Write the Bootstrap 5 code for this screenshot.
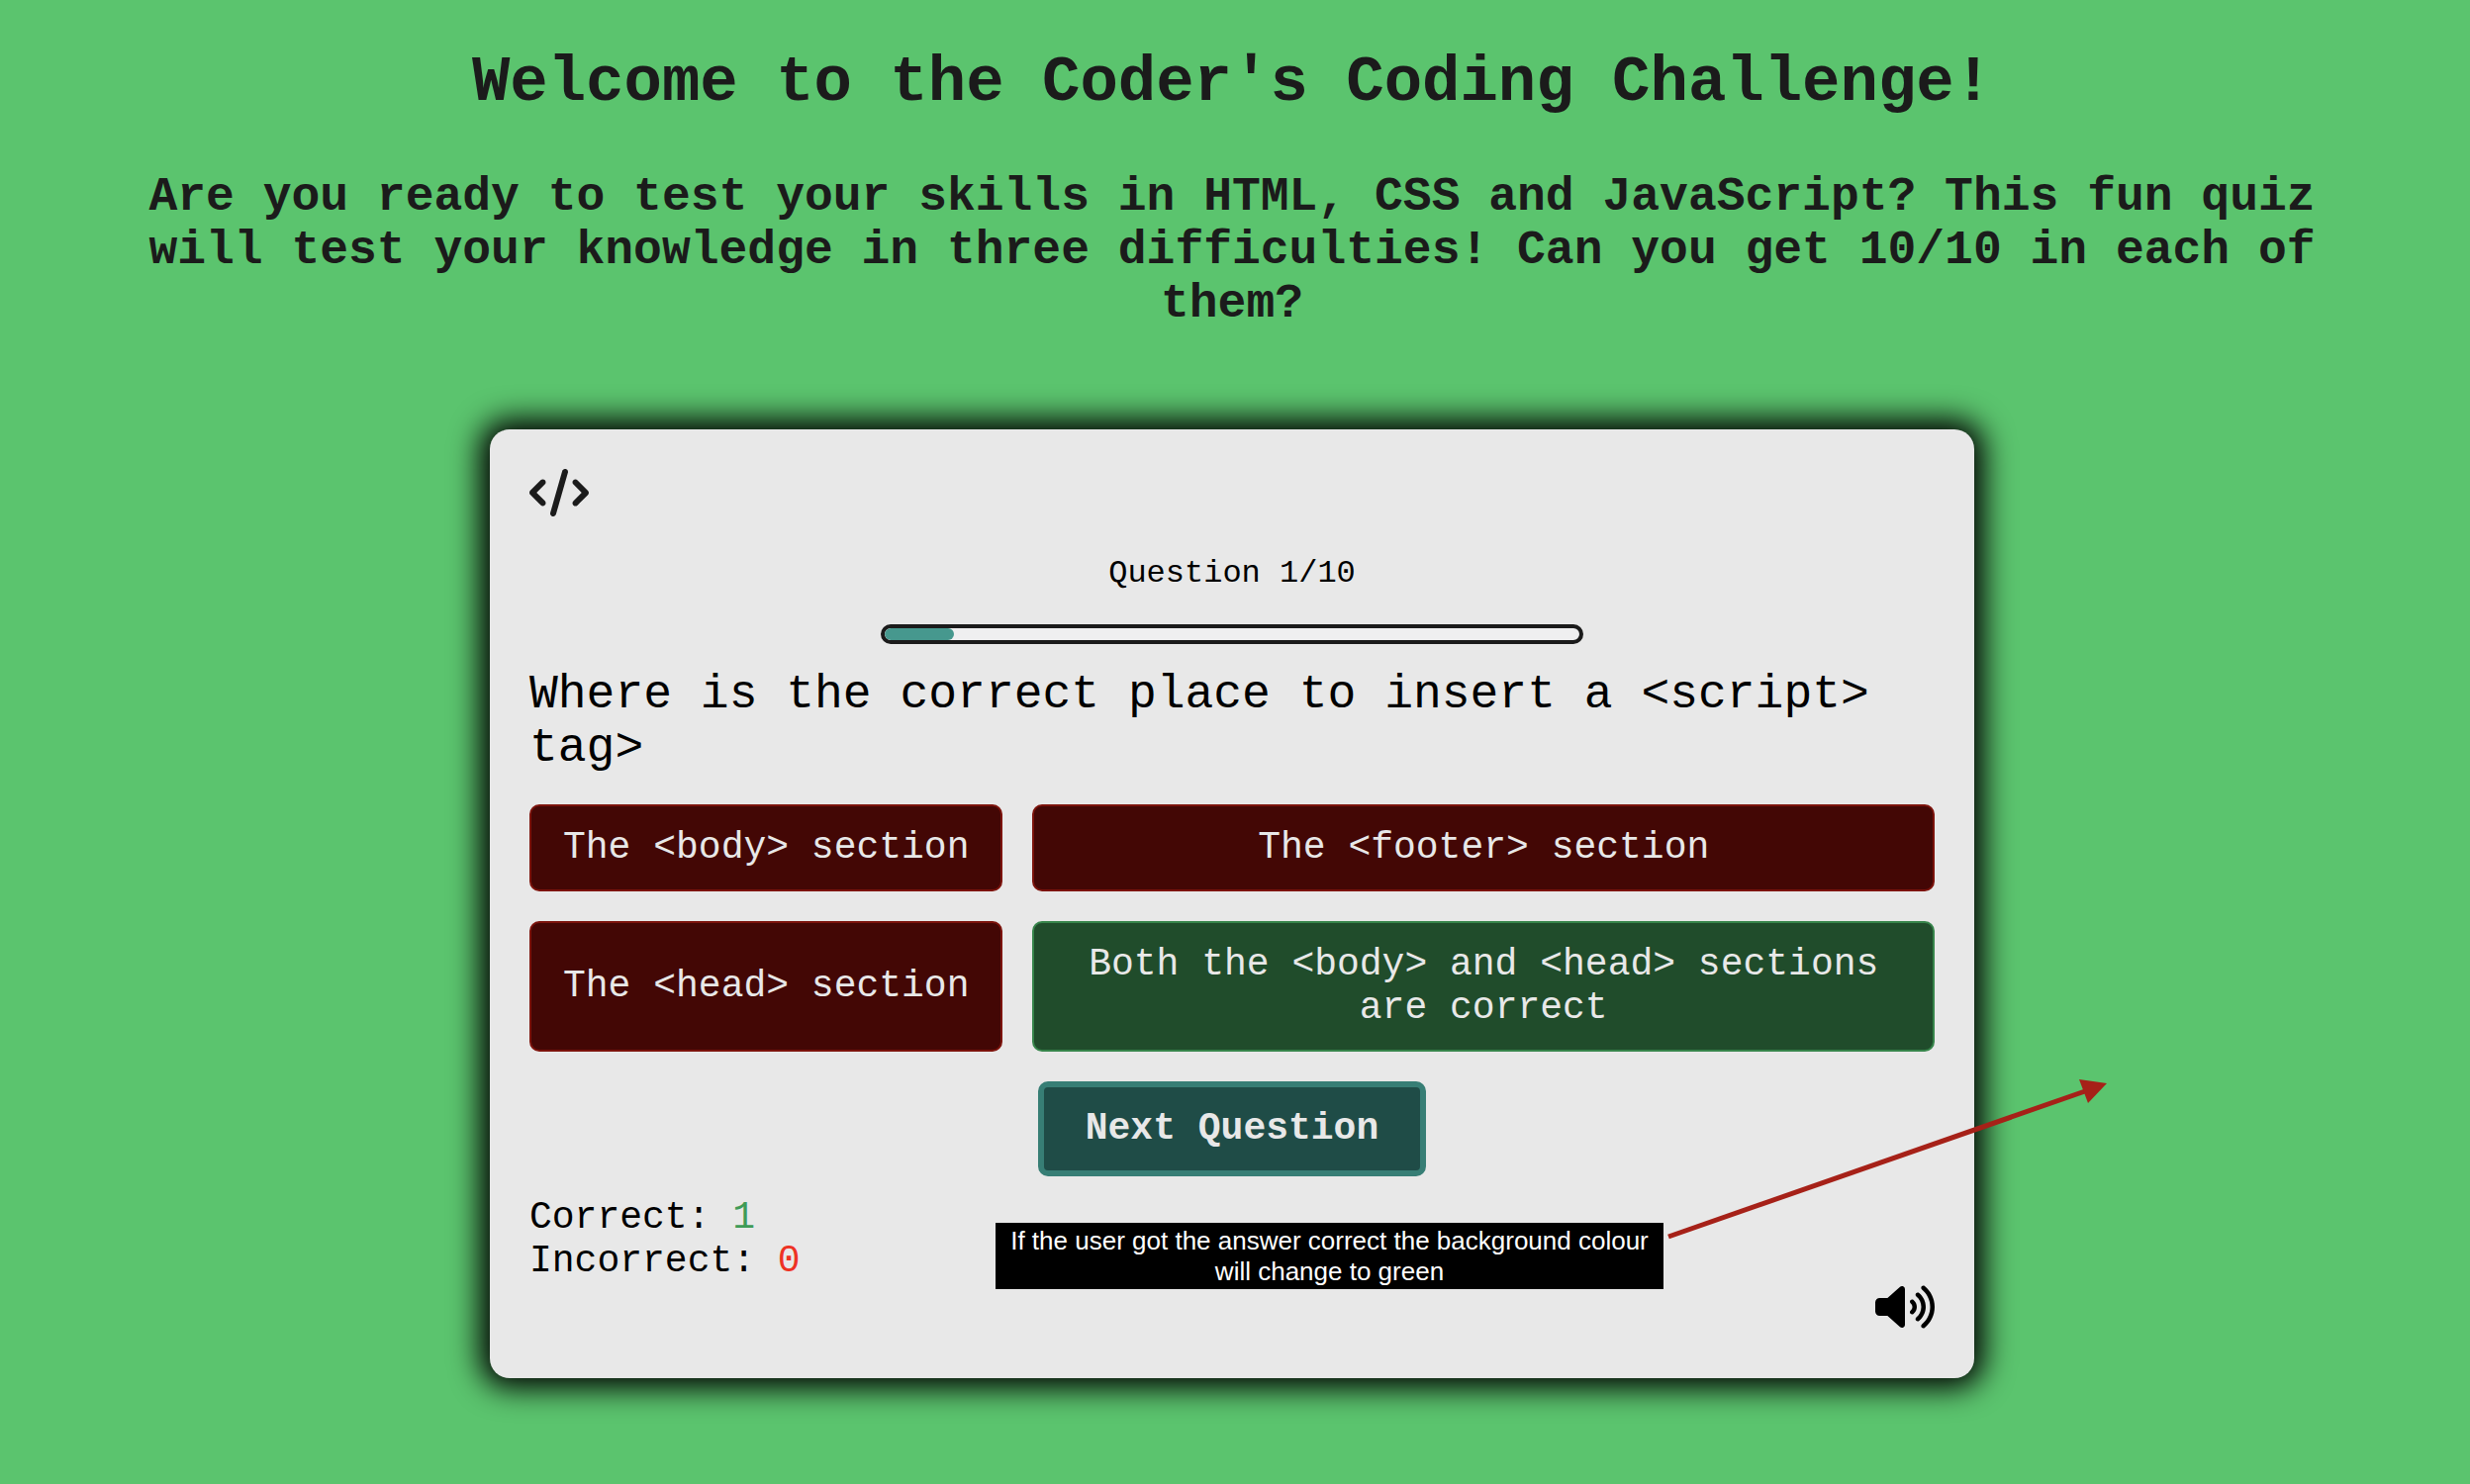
<!DOCTYPE html>
<html lang="en">
<head>
<meta charset="utf-8">
<meta name="viewport" content="width=device-width, initial-scale=1">
<title>Coder's Coding Challenge</title>
<link href="https://cdn.jsdelivr.net/npm/bootstrap@5.3.0/dist/css/bootstrap.min.css" rel="stylesheet">
<style>
  body {
    background: #5bc46e;
    color: #000;
    font-family: "Liberation Mono", "Courier New", monospace;
    font-size: 38px;
    line-height: 44px;
  }
  .page-wrap { padding: 48px 86px 48px 80px; }
  .page-title { font-size: 64px; line-height: 72px; margin-bottom: 52px; color: #1b1b1b; }
  .page-intro { font-size: 48px; line-height: 54px; margin-bottom: 100px; color: #1b1b1b; }
  .quiz-card {
    max-width: 1500px;
    padding: 40px 40px 48px;
    background: #e8e8e8;
    border-radius: 20px;
    box-shadow: 0 0 30px 10px #000;
  }
  .quiz-icon { width: 60px; height: 48px; fill: currentColor; display: block; }
  .home-link { color: #1b1b1b; margin-bottom: 40px; }
  .quiz-count { font-size: 32px; line-height: 36px; margin-bottom: 33px; }
  .quiz-progress {
    width: 50%;
    height: 20px;
    margin-bottom: 24px;
    border: 4px solid #1b1b1b;
    border-radius: 10px;
    background: #efeff0;
  }
  .quiz-progress .progress-bar { background: #46988e; border-radius: 6px; }
  .quiz-question { font-size: 48px; line-height: 54px; margin-bottom: 30px; }
  .answer-grid { grid-template-columns: auto 1fr; gap: 30px; margin-bottom: 30px; }
  .answer-btn, .next-btn { font-size: 38px; line-height: 44px; color: #e8e8e8; border-radius: 10px; }
  .answer-btn { padding: 20px 32px; border: 2px solid; }
  .answer-btn:hover, .next-btn:hover { color: #fff; }
  .answer-wrong { background: #430705; border-color: #7c130c; }
  .answer-right { background: #204c2b; border-color: #37854b; }
  .next-btn { padding: 20px 42px; border: 6px solid #377e75; background: #1f4c47; margin-bottom: 20px; }
  .score-right { color: #3f9b57; }
  .score-wrong { color: #ee3224; }
  .hint-note {
    right: 314px;
    bottom: 90px;
    width: 675px;
    padding: 3px 0 2px;
    background: #000;
    color: #fff;
    font-family: "Liberation Sans", Arial, sans-serif;
    font-size: 26px;
    line-height: 31px;
  }
  .hint-arrow { left: 100%; bottom: 133px; margin-left: -310px; width: 450px; height: 170px; pointer-events: none; }
</style>
</head>
<body>
<div class="page-wrap">
  <header class="text-center">
    <h1 class="page-title fw-bold">Welcome to the Coder's Coding Challenge!</h1>
    <h2 class="page-intro fw-bold">Are you ready to test your skills in HTML, CSS and JavaScript? This fun quiz will test your knowledge in three difficulties! Can you get 10/10 in each of them?</h2>
  </header>

  <main class="quiz-card position-relative mx-auto d-flex flex-column">
    <a href="#" class="home-link align-self-start" aria-label="Home">
      <svg class="quiz-icon" viewBox="0 0 640 512" aria-hidden="true"><path d="M392.8 1.2c-17-4.9-34.7 5-39.6 22l-128 448c-4.9 17 5 34.7 22 39.6s34.7-5 39.6-22l128-448c4.9-17-5-34.7-22-39.6zm80.6 120.1c-12.5 12.5-12.5 32.8 0 45.3L562.7 256l-89.4 89.4c-12.5 12.5-12.5 32.8 0 45.3s32.8 12.5 45.3 0l112-112c12.5-12.5 12.5-32.8 0-45.3l-112-112c-12.5-12.5-32.8-12.5-45.3 0zm-306.7 0c-12.5-12.5-32.8-12.5-45.3 0l-112 112c-12.5 12.5-12.5 32.8 0 45.3l112 112c12.5 12.5 32.8 12.5 45.3 0s12.5-32.8 0-45.3L77.3 256l89.4-89.4c12.5-12.5 12.5-32.8 0-45.3z"/></svg>
    </a>
    <p class="quiz-count text-center">Question 1/10</p>
    <div class="quiz-progress progress align-self-center" role="progressbar" aria-label="Quiz progress" aria-valuenow="1" aria-valuemin="0" aria-valuemax="10">
      <div class="progress-bar" style="width: 10%"></div>
    </div>
    <p class="quiz-question">Where is the correct place to insert a &lt;script&gt; tag&gt;</p>

    <div class="answer-grid d-grid">
      <button type="button" class="btn answer-btn answer-wrong">The &lt;body&gt; section</button>
      <button type="button" class="btn answer-btn answer-wrong">The &lt;footer&gt; section</button>
      <button type="button" class="btn answer-btn answer-wrong">The &lt;head&gt; section</button>
      <button type="button" class="btn answer-btn answer-right">Both the &lt;body&gt; and &lt;head&gt; sections are correct</button>
    </div>
    <button type="button" class="btn next-btn fw-bold align-self-center">Next Question</button>

    <p class="mb-0">Correct: <span class="score-right">1</span></p>
    <p class="mb-0">Incorrect: <span class="score-wrong">0</span></p>
    <button type="button" class="btn border-0 p-0 text-black align-self-end" aria-label="Toggle sound">
      <svg class="quiz-icon" viewBox="0 0 640 512" aria-hidden="true"><path d="M533.6 32.5C598.5 85.2 640 165.8 640 256s-41.5 170.7-106.4 223.5c-10.3 8.4-25.4 6.8-33.8-3.5s-6.8-25.4 3.5-33.8C557.5 398.2 592 331.2 592 256s-34.5-142.2-88.7-186.3c-10.3-8.4-11.8-23.5-3.5-33.8s23.5-11.8 33.8-3.5zM473.1 107c43.2 35.2 70.9 88.9 70.9 149s-27.7 113.8-70.9 149c-10.3 8.4-25.4 6.8-33.8-3.5s-6.8-25.4 3.5-33.8C475.3 341.3 496 301.1 496 256s-20.7-85.3-53.2-111.8c-10.3-8.4-11.8-23.5-3.5-33.8s23.5-11.8 33.8-3.5zm-60.5 74.5C434.1 199.1 448 225.9 448 256s-13.9 56.9-35.4 74.5c-10.3 8.4-25.4 6.8-33.8-3.5s-6.8-25.4 3.5-33.8C393.1 284.4 400 271 400 256s-6.9-28.4-17.7-37.3c-10.3-8.4-11.8-23.5-3.5-33.8s23.5-11.8 33.8-3.5zM301.1 34.8C312.6 40 320 51.4 320 64V448c0 12.6-7.4 24-18.9 29.2s-25 3.1-34.4-5.3L131.8 352H48c-26.5 0-48-21.5-48-48V208c0-26.5 21.5-48 48-48h83.8L266.7 40.1c9.4-8.4 22.9-10.4 34.4-5.3z"/></svg>
    </button>

    <div class="hint-note position-absolute text-center">If the user got the answer correct the background colour will change to green</div>
    <svg class="hint-arrow position-absolute" viewBox="0 0 450 170" aria-hidden="true">
      <path d="M1 160L422 13" stroke="#a62118" stroke-width="5" fill="none"/>
      <path d="M444 5L416 1L425 25Z" fill="#a62118"/>
    </svg>
  </main>
</div>
<script src="https://cdn.jsdelivr.net/npm/bootstrap@5.3.0/dist/js/bootstrap.bundle.min.js"></script>
</body>
</html>
